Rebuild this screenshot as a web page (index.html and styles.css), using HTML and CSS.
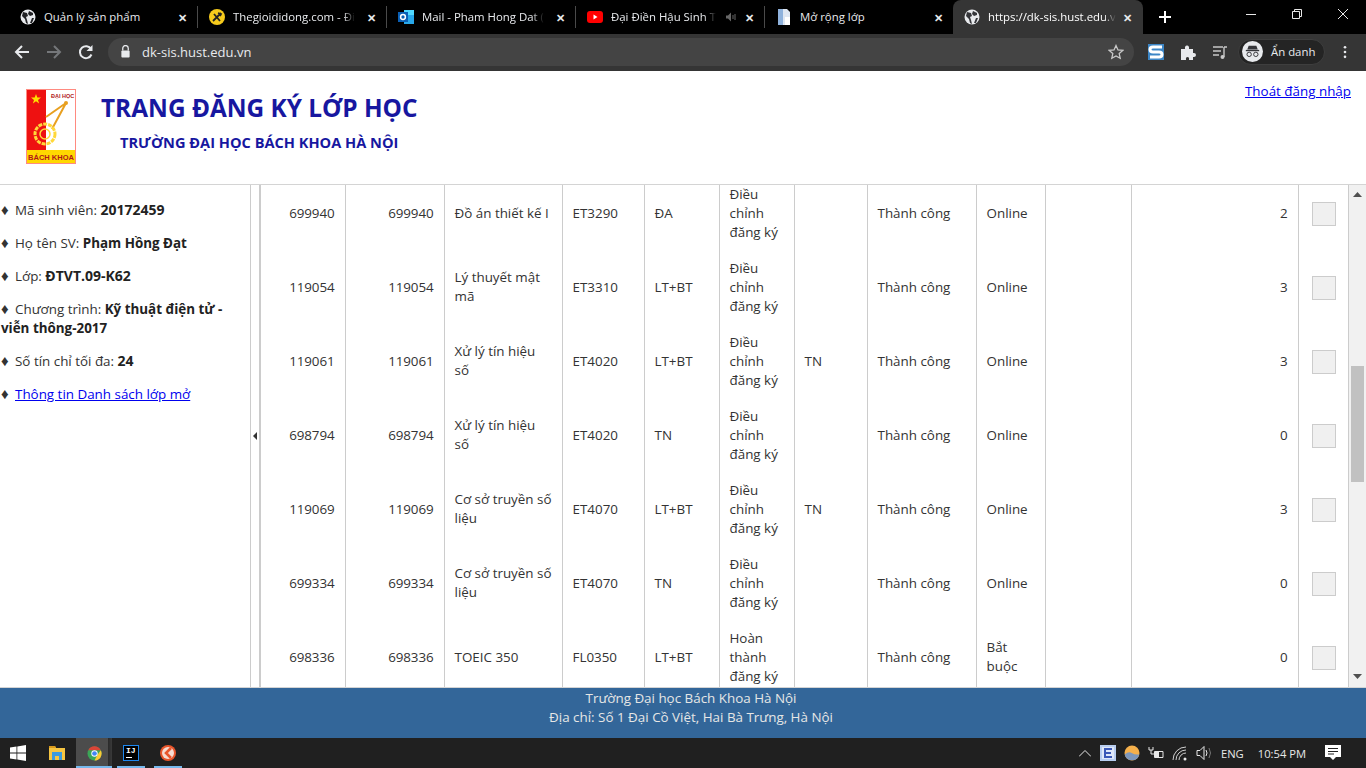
FILE: index.html
```html
<!DOCTYPE html>
<html lang="vi">
<head>
<meta charset="utf-8">
<title>Trang đăng ký lớp học</title>
<link rel="stylesheet" href="styles.css">
</head>
<body>
<div class="screen">
  <div class="tabstrip">
    <div class="tab">
      <svg class="favicon" viewBox="0 0 16 16"><circle cx="8" cy="8" r="7.5" fill="#e8eaed"/><path d="M3 3l4 1 1 3-2 1 1 3 1 4-2-1-1-4-3-3zM9 2l4 2 0 2-3 1-2-2zM12 9l2 0-2 5-2 0z" fill="#202124"/></svg>
      <span class="tab-title">Quản lý sản phẩm</span>
      <span class="tab-close">✕</span>
    </div>
    <div class="tab">
      <svg class="favicon" viewBox="0 0 16 16"><circle cx="8" cy="8" r="8" fill="#f6cb1c"/><path d="M4 12l8-8M5 5l6 7M9 4l3 1-1 2" stroke="#222" stroke-width="1.8" fill="none"/></svg>
      <span class="tab-title tab-fade">Thegioididong.com - Đi</span>
      <span class="tab-close">✕</span>
    </div>
    <div class="tab">
      <svg class="favicon" viewBox="0 0 16 16"><rect x="6" y="1" width="10" height="14" fill="#28a8ea"/><rect x="6" y="1" width="10" height="5" fill="#50d9ff"/><rect x="0" y="3" width="10" height="10" fill="#0a5fb4"/><circle cx="5" cy="8" r="2.4" fill="none" stroke="#fff" stroke-width="1.5"/></svg>
      <span class="tab-title tab-fade">Mail - Pham Hong Dat (</span>
      <span class="tab-close">✕</span>
    </div>
    <div class="tab">
      <svg class="favicon" viewBox="0 0 16 16"><rect y="2" width="16" height="12" rx="3" fill="#f00"/><path d="M6.5 5.5l4 2.500-4 2.500z" fill="#fff"/></svg>
      <span class="tab-title tab-fade">Đại Điền Hậu Sinh T</span>
      <svg class="tab-audio" viewBox="0 0 12 12"><path d="M1 4.500h2l3-3v9l-3-3h-2z" fill="#7a7a7a"/><path d="M8 4v4M10 3v6" stroke="#7a7a7a"/></svg>
      <span class="tab-close">✕</span>
    </div>
    <div class="tab tab-last">
      <svg class="favicon" viewBox="0 0 16 16"><path d="M2 0h9l3 3v13h-12z" fill="#dfe7f2"/><path d="M2 0h5v16h-5z" fill="#8fb2dc"/><path d="M9 8h5v8h-5z" fill="#fff"/></svg>
      <span class="tab-title">Mở rộng lớp</span>
      <span class="tab-close">✕</span>
    </div>
    <div class="tab tab-active">
      <svg class="favicon" viewBox="0 0 16 16"><circle cx="8" cy="8" r="7.5" fill="#e8eaed"/><path d="M3 3l4 1 1 3-2 1 1 3 1 4-2-1-1-4-3-3zM9 2l4 2 0 2-3 1-2-2zM12 9l2 0-2 5-2 0z" fill="#35363a"/></svg>
      <span class="tab-title tab-fade">https://dk-sis.hust.edu.v</span>
      <span class="tab-close">✕</span>
    </div>
    <svg class="newtab" viewBox="0 0 12 12"><path d="M6 0v12M0 6h12" stroke="#fff" stroke-width="2"/></svg>
    <div class="wincontrols">
      <svg viewBox="0 0 12 12"><path d="M1 6.500h10" stroke="#e8e8e8"/></svg>
      <svg viewBox="0 0 12 12"><path d="M1.500 3.500h7v7h-7zM3.500 3.500v-2h7v7h-2" stroke="#e8e8e8" fill="none"/></svg>
      <svg viewBox="0 0 12 12"><path d="M1 1l10 10M11 1l-10 10" stroke="#e8e8e8"/></svg>
    </div>
  </div>

  <div class="toolbar">
    <svg class="nav-icon" viewBox="0 0 16 16"><path d="M15 8h-13M8 2l-6 6 6 6" stroke="#e8eaed" stroke-width="2" fill="none"/></svg>
    <svg class="nav-icon" viewBox="0 0 16 16"><path d="M1 8h13M8 2l6 6-6 6" stroke="#75777a" stroke-width="2" fill="none"/></svg>
    <svg class="nav-icon" viewBox="0 0 16 16"><path d="M13.500 10.500a6 6 0 1 1-.4-5.500" stroke="#e8eaed" stroke-width="2" fill="none"/><path d="M14.500 1v6h-6z" fill="#e8eaed"/></svg>
    <div class="omnibox">
      <svg class="lock" viewBox="0 0 12 14"><path d="M3 6v-2.500a3 3 0 0 1 6 0v2.500" stroke="#e8eaed" stroke-width="1.400" fill="none"/><rect x="1.500" y="6" width="9" height="7.500" rx="1" fill="#e8eaed"/></svg>
      <span class="url">dk-sis.hust.edu.vn</span>
      <svg class="star" viewBox="0 0 16 16"><path d="M8 1.500l2 4.400 4.800.5-3.600 3.200 1 4.700-4.200-2.400-4.200 2.400 1-4.700-3.600-3.200 4.800-.5z" stroke="#c8c8c8" stroke-width="1.300" fill="none"/></svg>
    </div>
    <svg class="ext-s" viewBox="0 0 16 16"><rect width="16" height="16" fill="#3c86c6"/><path d="M14 3h-9q-3 0-3 2.500t3 2.500h6q3 0 3 2.500t-3 2.500h-9" stroke="#fff" stroke-width="3" fill="none"/></svg>
    <svg class="ext" viewBox="0 0 16 16"><path d="M1 5h4q-.5-3.500 2-3.500t2 3.500h4v4q3-.5 3 2t-3 2v3h-4q.5-3-1.500-3t-1.500 3h-5z" fill="#e8eaed"/></svg>
    <svg class="ext" viewBox="0 0 16 16"><path d="M1 3h10M1 7h8M1 11h6" stroke="#c8c8c8" stroke-width="1.400"/><path d="M12 3v10M12 3h3" stroke="#c8c8c8" stroke-width="1.400" fill="none"/><circle cx="10.500" cy="13" r="2" fill="#c8c8c8"/></svg>
    <div class="incognito">
      <svg class="incognito-face" viewBox="0 0 22 22"><circle cx="11" cy="11" r="11" fill="#e8eaed"/><path d="M7 5h8l1.500 4h-11z" fill="#35363a"/><path d="M4 10h14" stroke="#35363a" stroke-width="1.400"/><circle cx="7.500" cy="14" r="2.300" stroke="#35363a" fill="none"/><circle cx="14.500" cy="14" r="2.300" stroke="#35363a" fill="none"/></svg>
      <span>Ẩn danh</span>
    </div>
    <svg class="dots" viewBox="0 0 4 16"><circle cx="2" cy="2.500" r="1.500" fill="#e8eaed"/><circle cx="2" cy="8" r="1.500" fill="#e8eaed"/><circle cx="2" cy="13.500" r="1.500" fill="#e8eaed"/></svg>
  </div>

  <header class="site-header">
    <svg class="logo" viewBox="0 0 50 75">
      <rect width="50" height="75" fill="#ff8a80"/>
      <rect x="1" y="1" width="48" height="73" fill="#fff"/>
      <rect x="1" y="1" width="19" height="60" fill="#ee1111"/>
      <path d="M10 5l1.300 3.600 3.700 0-3 2.300 1.100 3.600-3.100-2.200-3.100 2.200 1.100-3.600-3-2.300 3.700 0z" fill="#ffdf00"/>
      <text x="25" y="9" class="logo-top">ĐẠI HỌC</text>
      <path d="M20 28l20-14-14 26" stroke="#e8a020" stroke-width="2" fill="none"/>
      <circle cx="40" cy="14" r="2" fill="#e8a020"/>
      <circle cx="19" cy="45" r="10" fill="none" stroke="#ffd83a" stroke-width="3" stroke-dasharray="4 1"/>
      <circle cx="19" cy="45" r="5" fill="none" stroke="#ffd83a" stroke-width="1.500"/>
      <rect x="1" y="61" width="48" height="13" fill="#ffd800"/>
      <text x="25" y="71" class="logo-bottom">BÁCH KHOA</text>
    </svg>
    <div class="brand">
      <div class="brand-title">TRANG ĐĂNG KÝ LỚP HỌC</div>
      <div class="brand-sub">TRƯỜNG ĐẠI HỌC BÁCH KHOA HÀ NỘI</div>
    </div>
    <a class="logout" href="#">Thoát đăng nhập</a>
  </header>

  <main class="workspace">
    <aside class="sidebar">
      <p><span class="bullet">♦</span>Mã sinh viên: <b class="wide">20172459</b></p>
      <p><span class="bullet">♦</span>Họ tên SV: <b>Phạm Hồng Đạt</b></p>
      <p><span class="bullet">♦</span>Lớp: <b class="wide">ĐTVT.09-K62</b></p>
      <p><span class="bullet">♦</span>Chương trình: <b>Kỹ thuật điện tử - viễn thông-2017</b></p>
      <p><span class="bullet">♦</span>Số tín chỉ tối đa: <b class="wide">24</b></p>
      <p><span class="bullet">♦</span><a href="#">Thông tin Danh sách lớp mở</a></p>
    </aside>
    <div class="splitter"><span class="splitter-arrow"></span></div>
    <div class="table-view">
      <table class="grid">
        <colgroup>
          <col class="c1"><col class="c2"><col class="c3"><col class="c4"><col class="c5"><col class="c6"><col class="c7"><col class="c8"><col class="c9"><col class="c10"><col class="c11"><col class="c12">
        </colgroup>
        <tbody>
          <tr><td class="num">699940</td><td class="num">699940</td><td>Đồ án thiết kế I</td><td>ET3290</td><td>ĐA</td><td>Điều chỉnh đăng ký</td><td></td><td>Thành công</td><td>Online</td><td></td><td class="num">2</td><td class="check"><span class="box"></span></td></tr>
          <tr><td class="num">119054</td><td class="num">119054</td><td>Lý thuyết mật mã</td><td>ET3310</td><td>LT+BT</td><td>Điều chỉnh đăng ký</td><td></td><td>Thành công</td><td>Online</td><td></td><td class="num">3</td><td class="check"><span class="box"></span></td></tr>
          <tr><td class="num">119061</td><td class="num">119061</td><td>Xử lý tín hiệu số</td><td>ET4020</td><td>LT+BT</td><td>Điều chỉnh đăng ký</td><td>TN</td><td>Thành công</td><td>Online</td><td></td><td class="num">3</td><td class="check"><span class="box"></span></td></tr>
          <tr><td class="num">698794</td><td class="num">698794</td><td>Xử lý tín hiệu số</td><td>ET4020</td><td>TN</td><td>Điều chỉnh đăng ký</td><td></td><td>Thành công</td><td>Online</td><td></td><td class="num">0</td><td class="check"><span class="box"></span></td></tr>
          <tr><td class="num">119069</td><td class="num">119069</td><td>Cơ sở truyền số liệu</td><td>ET4070</td><td>LT+BT</td><td>Điều chỉnh đăng ký</td><td>TN</td><td>Thành công</td><td>Online</td><td></td><td class="num">3</td><td class="check"><span class="box"></span></td></tr>
          <tr><td class="num">699334</td><td class="num">699334</td><td>Cơ sở truyền số liệu</td><td>ET4070</td><td>TN</td><td>Điều chỉnh đăng ký</td><td></td><td>Thành công</td><td>Online</td><td></td><td class="num">0</td><td class="check"><span class="box"></span></td></tr>
          <tr><td class="num">698336</td><td class="num">698336</td><td>TOEIC 350</td><td>FL0350</td><td>LT+BT</td><td>Hoàn thành đăng ký</td><td></td><td>Thành công</td><td>Bắt buộc</td><td></td><td class="num">0</td><td class="check"><span class="box"></span></td></tr>
        </tbody>
      </table>
    </div>
    <div class="scrollbar">
      <svg class="sb-arrow" viewBox="0 0 9 5"><path d="M4.500 0l4.500 5h-9z" fill="#505050"/></svg>
      <div class="sb-track"><div class="sb-thumb"></div></div>
      <svg class="sb-arrow" viewBox="0 0 9 5"><path d="M0 0h9l-4.500 5z" fill="#505050"/></svg>
    </div>
  </main>

  <footer class="site-footer">
    <div>Trường Đại học Bách Khoa Hà Nội</div>
    <div>Địa chỉ: Số 1 Đại Cồ Việt, Hai Bà Trưng, Hà Nội</div>
  </footer>

  <div class="taskbar">
    <div class="task task-start">
      <svg class="task-icon" viewBox="0 0 16 16"><path d="M0 2.400l6.500-.9v6.100h-6.500zM7.300 1.400l8.700-1.400v7.600h-8.700zM0 8.400h6.500v6.100l-6.500-.9zM7.300 8.400h8.700v7.600l-8.700-1.400z" fill="#fff"/></svg>
    </div>
    <div class="task task-files">
      <svg class="task-icon" viewBox="0 0 16 16"><path d="M0 1h6l1 2h9v12h-16z" fill="#f5c542"/><path d="M0 1h6l1 2h-7z" fill="#d99a1c"/><path d="M3 7h10v8h-3v-4h-4v4h-3z" fill="#3a9ae0"/></svg>
    </div>
    <div class="task task-chrome">
      <svg class="task-icon" viewBox="0 0 16 16"><circle cx="8" cy="8" r="7.500" fill="#3aa757"/><path d="M1.300 4.500a7.500 7.500 0 0 1 13.400 0h-6.700z" fill="#db4437"/><path d="M14.700 4.500a7.500 7.500 0 0 1-6.700 11l3-6z" fill="#fcc934"/><circle cx="8" cy="8" r="3.400" fill="#fff"/><circle cx="8" cy="8" r="2.500" fill="#4285f4"/></svg>
    </div>
    <div class="task task-ij">
      <div class="ij-icon"><span>IJ</span><i></i></div>
    </div>
    <div class="task task-orange">
      <svg class="task-icon" viewBox="0 0 16 16"><circle cx="8" cy="8" r="8" fill="#e8552b"/><circle cx="8" cy="8" r="6" fill="#f6dcd2"/><path d="M11 3l-5 5 5 5" stroke="#e8552b" stroke-width="2.600" fill="none"/></svg>
    </div>
    <div class="tray">
      <svg class="tray-chevron" viewBox="0 0 12 7"><path d="M0 6.500l6-6 6 6" stroke="#e8e8e8" fill="none"/></svg>
      <svg class="tray-icon" viewBox="0 0 16 16"><rect width="16" height="16" fill="#b8cdf0"/><rect x="2" y="2" width="12" height="12" fill="#dfe8fa"/><path d="M12 4h-7v8h7M5 8h6" stroke="#3a58b8" stroke-width="2" fill="none"/></svg>
      <svg class="tray-icon" viewBox="0 0 16 16"><circle cx="8" cy="8" r="7.500" fill="#f5b04c"/><path d="M.7 9.500q4-3.500 7-1.500t7.600 1.500a7.500 7.500 0 0 1-14.600 0z" fill="#7d97bc"/></svg>
      <svg class="tray-icon" viewBox="0 0 16 16"><path d="M6.500 6.500h8.500v6h-8.500z" stroke="#e8e8e8" fill="none"/><path d="M7 7h4v5h-4z" fill="#e8e8e8"/><path d="M1 2v3h4v-3M3 5v4h3" stroke="#e8e8e8" fill="none"/></svg>
      <svg class="tray-icon" viewBox="0 0 16 16"><path d="M1 15a13 13 0 0 1 13-13M4 15a10 10 0 0 1 10-10M7 15a7 7 0 0 1 7-7" stroke="#d0d0d0" fill="none"/><circle cx="13" cy="14" r="1.500" fill="#e8e8e8"/></svg>
      <svg class="tray-icon" viewBox="0 0 16 16"><path d="M1 5.500h3l4-4v13l-4-4h-3z" stroke="#e8e8e8" fill="none"/><path d="M10 5q2 3 0 6" stroke="#e8e8e8" fill="none"/><path d="M13 3q3 5 0 10" stroke="#777" fill="none"/></svg>
      <span class="tray-lang">ENG</span>
      <span class="tray-time">10:54 PM</span>
      <svg class="tray-note" viewBox="0 0 16 16"><path d="M0 0h16v12h-5l-3 3-3-3h-5z" fill="#fff"/><path d="M3 3.500h10M3 6.500h10M3 9h6" stroke="#202020"/></svg>
    </div>
  </div>
</div>
</body>
</html>
```

FILE: styles.css
```css
* { box-sizing: border-box; }
html, body { margin: 0; padding: 0; height: 100%; overflow: hidden; }
body { font-family: "Open Sans", "Noto Sans", sans-serif; font-size: 13.4px; color: #333; background: #fff; }
svg { display: block; flex: none; }
.screen { width: 1366px; height: 768px; display: flex; flex-direction: column; }

/* browser tabs */
.tabstrip { height: 34px; background: #000; display: flex; align-items: flex-end; padding-left: 9px; flex: none; }
.tab { width: 189px; height: 29px; display: flex; align-items: center; padding: 0 7px 5px 11px; border-right: 1px solid #4a4a4a; color: #e8eaed; font-size: 11.400px; white-space: nowrap; flex: none; border-image: linear-gradient(#000 8%, #4a4a4a 8%, #4a4a4a 78%, #000 78%) 1; }
.tab-last { border-image: none; border-right: 0; width: 188px; }
.tab-active { background: #353535; border: 0; border-image: none; border-radius: 8px 8px 0 0; height: 34px; width: 190px; padding: 0 8px 0 11px; color: #fff; }
.favicon { width: 16px; height: 16px; margin-right: 8px; }
.tab-title { flex: none; margin: 0 auto 2px 0; }
.tab-fade { -webkit-mask-image: linear-gradient(to right, #000 calc(100% - 12px), transparent); mask-image: linear-gradient(to right, #000 calc(100% - 12px), transparent); }
.tab-audio { width: 12px; height: 12px; margin: 0 4px 0 0; opacity: .85; }
.tab-close { width: 16px; font-size: 11px; font-weight: 700; text-align: center; color: #e8eaed; }
.newtab { width: 12px; height: 12px; margin: 0 0 11px 16px; }
.wincontrols { display: flex; margin-left: auto; gap: 34px; padding: 0 17px 14px 0; align-self: flex-end; }
.wincontrols svg { width: 12px; height: 12px; }

/* toolbar */
.toolbar { height: 37px; background: #353535; display: flex; align-items: center; flex: none; padding: 0 0 2px 14px; }
.nav-icon { width: 16px; height: 16px; margin-right: 16px; }
.omnibox { width: 1026px; height: 28px; border-radius: 14px; background: #444; margin-left: -2px; display: flex; align-items: center; padding: 0 10px 0 12px; }
.lock { width: 11px; height: 13px; margin-right: 11px; }
.url { font-size: 13px; color: #e8eaed; flex: 1; }
.star { width: 16px; height: 16px; }
.ext-s { width: 16px; height: 16px; margin-left: 14px; }
.ext { width: 16px; height: 16px; margin-left: 16px; }
.incognito { width: 87px; height: 26px; margin-left: 10px; border-radius: 13px; background: #242424; border: 1px solid #3e3e3e; display: flex; align-items: center; padding-left: 3px; gap: 8px; color: #e8eaed; font-size: 11.400px; white-space: nowrap; }
.incognito-face { width: 21px; height: 21px; }
.dots { width: 4px; height: 14px; margin-left: 18px; }

/* page header */
.site-header { height: 114px; background: #fff; display: flex; align-items: flex-start; padding: 18px 15px 0 26px; flex: none; border-bottom: 1px solid #d4d4d4; }
.logo { width: 50px; height: 75px; }
.logo-top { font: 700 5.500px "Liberation Sans", sans-serif; fill: #b01818; }
.logo-bottom { font: 700 7.500px "Liberation Sans", sans-serif; fill: #b01818; text-anchor: middle; }
.brand { margin: 1px 0 0 25px; color: #1717a0; font-weight: 700; white-space: nowrap; }
.brand-title { font-size: 24.400px; line-height: 36px; }
.brand-sub { font-size: 14.600px; line-height: 20px; margin: 6px 0 0 19px; }
.logout { margin-left: auto; margin-top: -7px; color: #00e; font-size: 13.400px; line-height: 19px; }

/* main */
.workspace { height: 503px; display: flex; flex: none; overflow: hidden; border-bottom: 1px solid #d4d4d4; }
.sidebar { width: 251px; flex: none; border-right: 1px solid #ccc; padding: 16px 0 0 1px; line-height: 19px; }
.sidebar p { margin: 0 22px 14px 0; }
.sidebar a { color: #00e; }
.sidebar b { line-height: 1; color: #222; }
.sidebar b.wide { font-size: 14px; }
.bullet { display: inline-block; width: 14px; font-size: 15px; line-height: 1; }
.splitter { width: 10px; flex: none; display: flex; align-items: center; justify-content: center; border-right: 2px solid #ccc; }
.splitter-arrow { width: 0; height: 0; border: 4px solid transparent; border-right-color: #333; border-left-width: 0; }
.table-view { width: 1087px; flex: none; overflow: hidden; }
.grid { width: 1087px; table-layout: fixed; border-collapse: collapse; margin-top: -9px; line-height: 19px; }
.c1 { width: 84px; } .c2 { width: 99px; } .c3 { width: 118px; } .c4 { width: 82px; } .c5 { width: 75px; } .c6 { width: 75px; } .c7 { width: 73px; } .c8 { width: 109px; } .c9 { width: 69px; } .c10 { width: 86px; } .c11 { width: 167px; } .c12 { width: 50px; }
.grid td { height: 74px; padding: 0 9px 0 10px; border-right: 1px solid #ccc; vertical-align: middle; overflow: hidden; }
.grid td.num { text-align: right; padding-right: 10px; letter-spacing: -.1px; }
.grid td.check { padding: 0 0 0 13px; border-right: 0; }
.box { display: block; width: 24px; height: 24px; margin-top: 2px; background: #f0f0f0; border: 1px solid #ccc; }

/* fake scrollbar */
.scrollbar { width: 18px; flex: none; background: #f1f1f1; border-left: 1px solid #ccc; display: flex; flex-direction: column; align-items: center; padding: 7px 0 8px; }
.sb-arrow { width: 9px; height: 5px; }
.sb-track { flex: 1; width: 13px; padding-top: 169px; }
.sb-thumb { height: 116px; background: #c1c1c1; }

/* footer */
.site-footer { height: 50px; background: #336699; color: #e6e6e6; line-height: 19px; text-align: center; padding: 1px 0 0 16px; flex: none; }

/* taskbar */
.taskbar { height: 30px; background: #202020; display: flex; flex: none; align-items: stretch; }
.task { display: flex; align-items: center; justify-content: center; border-bottom: 2px solid transparent; padding-top: 2px; }
.task-icon { width: 16px; height: 16px; }
.task-start { width: 36px; border: 0; padding: 0; }
.task-files { width: 28px; margin-left: 7px; border: 0; padding: 0; }
.task-chrome { width: 36px; margin-left: 5px; background: linear-gradient(to right, #4c4c4c 32px, #2a2a2a 32px, #3a3a3a 36px); border-bottom-color: #76b9ed; }
.task-chrome .task-icon { width: 15px; height: 15px; }
.task-ij { width: 28px; margin-left: 5px; border-bottom-color: #76b9ed; }
.task-orange { width: 28px; margin-left: 9px; border-bottom-color: #76b9ed; }
.ij-icon { width: 16px; height: 16px; background: #000; border: 1px solid #1e88f0; color: #fff; font: 700 8px/8px "Liberation Mono", monospace; padding: 1px 0 0 2px; }
.ij-icon span { display: block; }
.ij-icon i { display: block; width: 6px; height: 1px; background: #fff; margin-top: 2px; }
.tray { margin-left: auto; display: flex; align-items: center; color: #e8e8e8; font-size: 11.200px; white-space: nowrap; padding-right: 25px; }
.tray-chevron { width: 12px; height: 7px; margin-right: 9px; }
.tray-icon { width: 16px; height: 16px; margin-right: 8px; }
.tray-lang { margin: 0 14px 0 1px; }
.tray-time { margin-right: 19px; }
.tray-note { width: 16px; height: 16px; }
```
